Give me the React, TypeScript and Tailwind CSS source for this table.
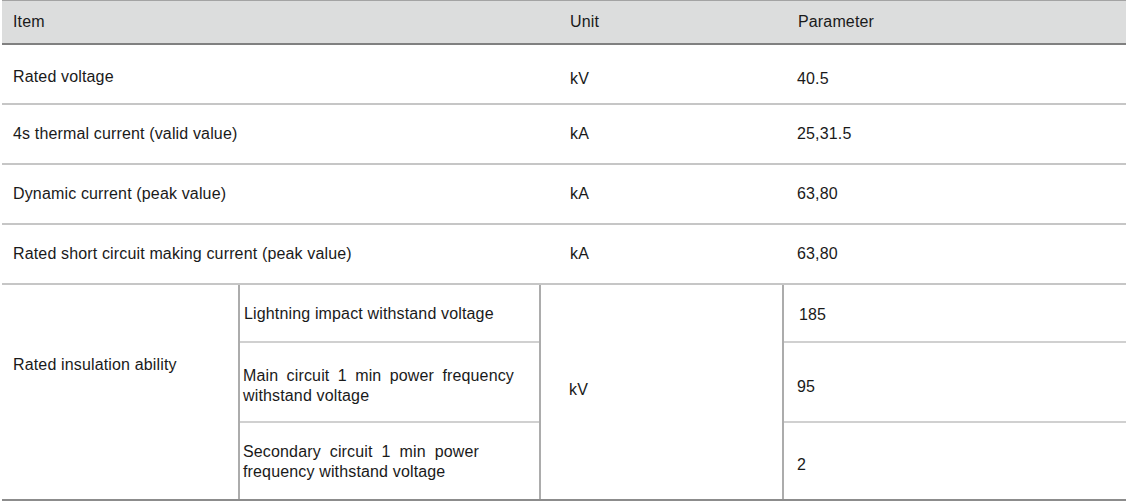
const rows = [
  { item: "Rated voltage", unit: "kV", value: "40.5", shift: true },
  { item: "4s thermal current (valid value)", unit: "kA", value: "25,31.5" },
  { item: "Dynamic current (peak value)", unit: "kA", value: "63,80" },
  { item: "Rated short circuit making current (peak value)", unit: "kA", value: "63,80" },
];

export default function App() {
  return (
    <div className="h-[502px] w-[1126px] overflow-hidden bg-white font-['Liberation_Sans',Arial,sans-serif] text-[16px] tracking-[0.15px] text-[#1a1a1a]">
      <div className="ml-[2px]">
        <div className="flex h-[45px] items-center border-t border-b-2 border-t-[#a3a3a3] border-b-[#808080] bg-[#dcdddd]">
          <div className="w-[537px] pl-[11px]">Item</div>
          <div className="w-[243px] pl-[31px]">Unit</div>
          <div className="flex-1 pl-[16px]">Parameter</div>
        </div>

        {rows.map((row) => (
          <div
            key={row.item}
            className="flex h-[60px] items-center border-b-2 border-[#c6c6c6]"
          >
            <div className={`w-[537px] pl-[11px] ${row.shift ? "pt-[6px]" : ""}`}>{row.item}</div>
            <div className={`w-[243px] pl-[31px] ${row.shift ? "pt-[10px]" : ""}`}>{row.unit}</div>
            <div className={`flex-1 pl-[15px] ${row.shift ? "pt-[10px]" : ""}`}>{row.value}</div>
          </div>
        ))}

        <div className="flex h-[216px] border-b-2 border-[#8c8c8c]">
          <div className="w-[236px] pl-[11px] pt-[68px]">Rated insulation ability</div>
          <div className="flex w-[301px] flex-col border-l-2 border-[#acacac]">
            <div className="flex h-[58px] items-center border-b-2 border-[#d0d0d0] pl-[4px] pt-[1px]">
              Lightning impact withstand voltage
            </div>
            <div className="flex h-[80px] items-center border-b-2 border-[#d0d0d0] pl-[3px] pt-[8px]">
              <p className="w-[271px] text-justify leading-[20px]">
                Main circuit 1 min power frequency withstand voltage
              </p>
            </div>
            <div className="flex flex-1 items-center pl-[3px] pt-[2px]">
              <p className="w-[236px] text-justify leading-[20px]">
                Secondary circuit 1 min power frequency withstand voltage
              </p>
            </div>
          </div>
          <div className="flex w-[243px] items-center border-l-2 border-[#acacac] pb-[4px] pl-[28px]">
            kV
          </div>
          <div className="flex flex-1 flex-col border-l-2 border-[#acacac]">
            <div className="flex h-[58px] items-center border-b-2 border-[#d0d0d0] pl-[15px] pt-[4px]">
              185
            </div>
            <div className="flex h-[80px] items-center border-b-2 border-[#d0d0d0] pl-[13px] pt-[10px]">
              95
            </div>
            <div className="flex flex-1 items-center pl-[13px] pt-[8px]">2</div>
          </div>
        </div>
      </div>
    </div>
  );
}
